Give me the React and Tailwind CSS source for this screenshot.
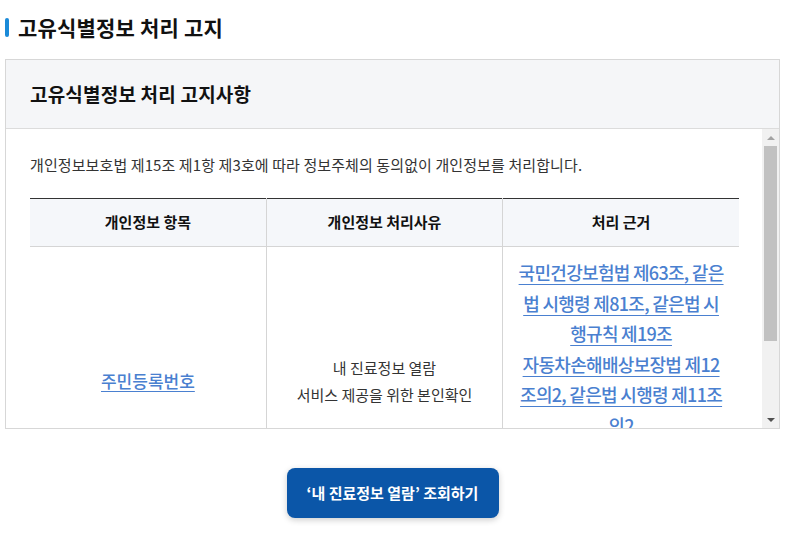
const font = {fontFamily: '"Noto Sans CJK KR", "Noto Sans", sans-serif'};

const basis = [
    "국민건강보험법 제63조, 같은법 시행령 제81조, 같은법 시행규칙 제19조",
    "자동차손해배상보장법 제12조의2, 같은법 시행령 제11조의2",
];

// 스크롤바 (화살표 + 썸)
const ScrollBar = () => (
    <div className="w-[17px] shrink-0 bg-[#f1f1f1] flex flex-col">
        <div className="h-[17px] flex items-center justify-center">
            <span className="w-0 h-0 border-l-[4px] border-r-[4px] border-b-[4px] border-l-transparent border-r-transparent border-b-[#a3a3a3]"></span>
        </div>
        <div className="h-[195px] mx-[2px] bg-[#c1c1c1]"></div>
        <div className="flex-1"></div>
        <div className="h-[17px] flex items-center justify-center">
            <span className="w-0 h-0 border-l-[4px] border-r-[4px] border-t-[4px] border-l-transparent border-r-transparent border-t-[#505050]"></span>
        </div>
    </div>
);

export default function App() {
    return (
        <div className="w-[785px] h-[543px] bg-white text-[#222]" style={font}>
            <div className="flex items-center gap-[9px] pl-[5px] pt-[13px] h-[42px]">
                <span className="w-[4px] h-[19px] rounded-full bg-[#1a8ad8]"></span>
                <h1 className="text-[21px] font-bold text-[#111] tracking-[0.2px]">고유식별정보 처리 고지</h1>
            </div>

            <div className="mx-[5px] mt-[17px] border border-[#d7d7d7]">
                <div className="h-[69px] flex items-center px-[24px] bg-[#f5f6f8] border-b border-[#dcdcdc]">
                    <h2 className="text-[19px] font-bold text-[#111] tracking-[0.2px]">고유식별정보 처리 고지사항</h2>
                </div>
                <div className="h-[299px] flex overflow-hidden">
                    <div className="flex-1 pl-[24px] pr-[23px] pt-[25px]">
                        <p className="text-[15px] text-[#333] leading-[22px] tracking-[0.1px]">
                            개인정보보호법 제15조 제1항 제3호에 따라 정보주체의 동의없이 개인정보를 처리합니다.
                        </p>
                        <table className="w-full mt-[22px] border-t border-[#333] border-collapse table-fixed">
                            <thead>
                                <tr className="bg-[#f5f7fa] h-[48px] border-b border-[#d5d5d5]">
                                    <th className="text-[15px] font-bold text-[#111]">개인정보 항목</th>
                                    <th className="text-[15px] font-bold text-[#111] border-l border-[#d5d5d5]">개인정보 처리사유</th>
                                    <th className="text-[15px] font-bold text-[#111] border-l border-[#d5d5d5]">처리 근거</th>
                                </tr>
                            </thead>
                            <tbody>
                                <tr className="h-[268px]">
                                    <td className="text-center align-middle">
                                        <a href="#" className="text-[17px] font-medium text-[#4a80d0] underline underline-offset-[3px]">주민등록번호</a>
                                    </td>
                                    <td className="text-center align-middle border-l border-[#d5d5d5] text-[15px] text-[#333] leading-[27px]">
                                        내 진료정보 열람<br/>서비스 제공을 위한 본인확인
                                    </td>
                                    <td className="align-top border-l border-[#d5d5d5] px-[14px] pt-[10px] text-center">
                                        {basis.map(b => (
                                            <a key={b} href="#" className="block text-[18px] font-medium tracking-[-0.7px] leading-[30.5px] text-[#4a80d0] underline underline-offset-[4px]">{b}</a>
                                        ))}
                                    </td>
                                </tr>
                            </tbody>
                        </table>
                    </div>
                    <ScrollBar/>
                </div>
            </div>

            <div className="flex justify-center mt-[39px]">
                <button className="w-[212px] h-[50px] rounded-[8px] bg-[#0b56a8] text-white text-[15px] font-bold shadow-[0_2px_6px_rgba(0,0,0,0.2)]">
                    ‘내 진료정보 열람’ 조회하기
                </button>
            </div>
        </div>
    );
}
